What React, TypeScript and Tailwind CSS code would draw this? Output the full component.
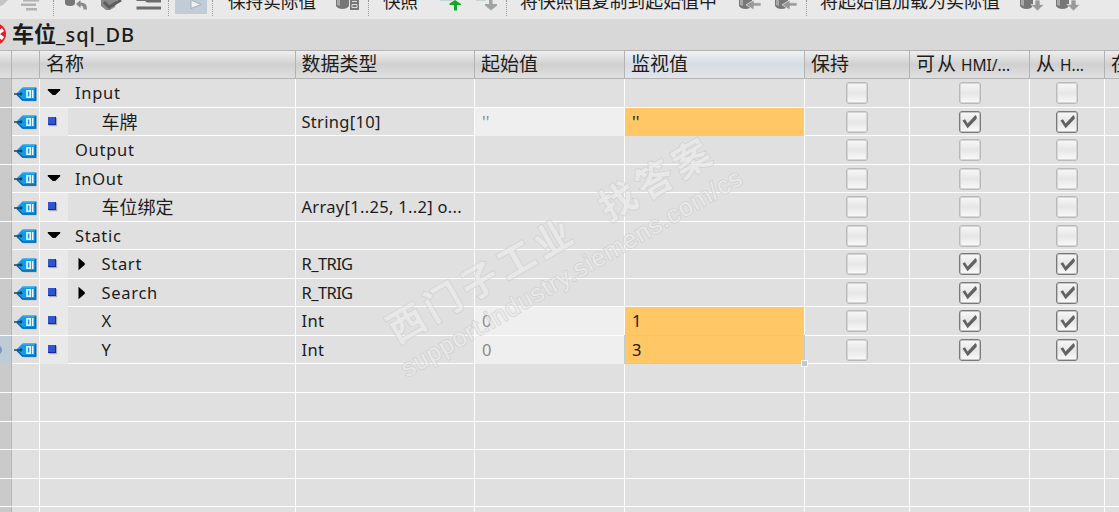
import clsx from "clsx";

type Row = {
  name: string;
  kind: "section" | "item";
  arrow?: "down" | "right";
  type?: string;
  start?: string;
  value?: string;
  checked?: boolean;
  selected?: boolean;
};

const rows: Row[] = [
  { name: "Input", kind: "section", arrow: "down" },
  { name: "车牌", kind: "item", type: "String[10]", start: "''", value: "''", checked: true },
  { name: "Output", kind: "section" },
  { name: "InOut", kind: "section", arrow: "down" },
  { name: "车位绑定", kind: "item", type: "Array[1..25, 1..2] o..." },
  { name: "Static", kind: "section", arrow: "down" },
  { name: "Start", kind: "item", arrow: "right", type: "R_TRIG", checked: true },
  { name: "Search", kind: "item", arrow: "right", type: "R_TRIG", checked: true },
  { name: "X", kind: "item", type: "Int", start: "0", value: "1", checked: true },
  { name: "Y", kind: "item", type: "Int", start: "0", value: "3", checked: true, selected: true },
];

const emptyRows = [0, 1, 2, 3, 4, 5];

const grid = "grid grid-cols-[12px_28px_255.5px_179.5px_150px_180px_105px_120px_75px_60px]";
const cell = "border-r-[1.5px] border-[#fdfdfd]";

const TagIcon = () => (
  <svg width="24" height="18" viewBox="0 0 24 18" className="block">
    <path d="M8 3.5 10.5 2H23v14.5H10L8 15 3 10V8.5z" fill="#aeb6bd" opacity=".7" />
    <path d="M2.5 8.5 8.5 2.5H22v13H8.5z" fill="#129be9" />
    <path d="M3 9.5 8.5 15H21.5V3" fill="none" stroke="#0869ae" strokeWidth="1.6" />
    <path d="M8.5 3H21" stroke="#45b8f5" strokeWidth="1" />
    <path d="M0 9h7" stroke="#174563" strokeWidth="1.5" />
    <circle cx="7" cy="9" r="1.4" fill="#083b68" />
    <path d="M13 5.7h3.2v6.6H13zM18.7 5v8" fill="none" stroke="#e8f8ff" strokeWidth="1.6" />
  </svg>
);

const Checkbox = ({ checked }: { checked?: boolean }) => (
  <div
    className={clsx(
      "flex h-[22px] w-[22px] items-center justify-center rounded-[3px] border-[1.5px] bg-linear-to-b from-[#f8f8f8] via-[#e6e6e6] to-[#fafafa]",
      checked
        ? "border-[#797979] shadow-[inset_0_0_0_1px_#c4c4c4]"
        : "border-[#b9b9b9] shadow-[inset_0_0_0_1px_#d6d6d6]"
    )}
  >
    {checked && (
      <svg width="17" height="17" viewBox="0 0 17 17">
        <path d="M1.5 7.5 4 6.3l2.6 4.2L14.5 2l1.2 1.8v2L6.6 15.2z" fill="#626262" />
      </svg>
    )}
  </div>
);

const Arrow = ({ dir }: { dir: "down" | "right" }) => (
  <svg width="14" height="14" viewBox="0 0 14 14">
    <path d={dir === "down" ? "M.8 4h12.4v1.2L8.3 10H5.7L.8 5.2z" : "M3.5.8 9.8 6.3v1.4L3.5 13.2z"} fill="#000" />
  </svg>
);

const Separator = () => <div className="absolute top-0 h-4 border-l-[1.5px] border-dotted border-[#999]" />;

const DbIcon = ({ arrow }: { arrow?: "left" | "down" }) => (
  <svg width="26" height="12" viewBox="0 0 26 12" className="block">
    <path d="M0 0h13v6q-2 3-6.500 3T0 6z" fill="#777" />
    <path d="M1 0h3v6L1 5z" fill="#aaa" />
    {arrow === "left" && <path d="M22 2.800h-7V0L7 4.800 15 10V6h7z" fill="#999" stroke="#e9e9e9" strokeWidth=".7" />}
    {arrow === "down" && <path d="M15 0h5v4.500h4L17.500 11 11 4.500h4z" fill="#999" stroke="#e9e9e9" strokeWidth=".7" />}
    {!arrow && (
      <g>
        <path d="M14 0h9v10h-9z" fill="#777" />
        <path d="M16 1.500h5M16 4.500h5v3h-5z" fill="none" stroke="#ddd" />
      </g>
    )}
  </svg>
);

const Toolbar = () => (
  <div className="relative h-[18.5px] overflow-hidden bg-[#e9e9e9] text-[17.6px] leading-[18px] whitespace-nowrap text-[#1c1c1c]">
    <div className="absolute top-0 left-0">
      <svg width="170" height="13" viewBox="0 0 170 13">
        <path d="M0 0h8L3 5 0 6z" fill="#c4c4c4" />
        <path d="M23 0h16v1.500H23zM21 3.500h15v2.500H21zM26 8h11v2.500H26z" fill="#b2b2b2" />
        <path d="M65 0h10v3q0 3-5 3t-5-3z" fill="#777" />
        <path d="M76 4 80.500 0v2.500q7 0 6.500 7h-3.500q0-4-3-4V8z" fill="#8a8a8a" />
        <path d="M101 0h16l-2 7-5 3h-4l-5-4z" fill="#888" />
        <path d="M104 2l5 5L121 0" fill="none" stroke="#5c5c5c" strokeWidth="3" />
        <path d="M136.500 0H161v2.500h-14L145 1h-8.500zM136.500 6.500H161V9.500H136.500z" fill="#6c6c6c" />
      </svg>
    </div>
    <div className="absolute left-[53px]"><Separator /></div>
    <div className="absolute left-[168px]"><Separator /></div>
    <div className="absolute top-0 left-[175px] h-3.5 w-8 bg-[#c1ccd6]">
      <svg width="32" height="14"><path d="M16 1v7.500L26 4.500 16 0" fill="#edf1f4" stroke="#99a4ae" strokeWidth=".8" /></svg>
    </div>
    <div className="absolute left-[212px]"><Separator /></div>
    <span className="absolute -top-2 left-[228px]">保持实际值</span>
    <div className="absolute top-0 left-[336px]"><DbIcon /></div>
    <div className="absolute left-[368px]"><Separator /></div>
    <span className="absolute -top-2 left-[383px]">快照</span>
    <svg className="absolute top-0 left-[438px]" width="64" height="12" viewBox="0 0 64 12">
      <path d="M2 0h12M38 0h10" stroke="#b9cbd6" strokeWidth="1.500" />
      <path d="M16 10.500V5h-4.500v-1.500L17 0l6 4v1h-4v5.500z" fill="#16a72a" />
      <path d="M51 0h3.500v4H59v1.500L53 10.500 47 5.500V4h4z" fill="#a2a2a2" />
    </svg>
    <div className="absolute left-[506px]"><Separator /></div>
    <span className="absolute -top-2 left-[520px] text-[17.9px]">将快照值复制到起始值中</span>
    <div className="absolute top-0 left-[739px]"><DbIcon arrow="left" /></div>
    <div className="absolute top-0 left-[775px]"><DbIcon arrow="left" /></div>
    <div className="absolute left-[806px]"><Separator /></div>
    <span className="absolute -top-2 left-[820px] text-[18px]">将起始值加载为实际值</span>
    <div className="absolute top-0 left-[1020px]"><DbIcon arrow="down" /></div>
    <div className="absolute top-0 left-[1056px]"><DbIcon arrow="down" /></div>
  </div>
);

const headers = ["", "", "名称", "数据类型", "起始值", "监视值", "保持"];

const Header = () => (
  <div className={clsx(grid, "h-[29px] border-t-[1.5px] border-b-[1.5px] border-[#b3b3b3] text-[19px] leading-[27px]")}>
    {headers.map((title, i) => (
      <div
        key={i}
        className={clsx(
          "overflow-hidden border-r-[1.5px] border-[#b3b3b3] pl-1.5 whitespace-nowrap",
          title === "监视值"
            ? "bg-linear-to-b from-[#eff1f4] via-[#d7dce4] to-[#e2e6ea]"
            : "bg-linear-to-b from-[#efefef] via-[#d0d0d0] to-[#e0e0e0]"
        )}
      >
        {title}
      </div>
    ))}
    <div className="overflow-hidden border-r-[1.5px] border-[#b3b3b3] bg-linear-to-b from-[#efefef] via-[#d0d0d0] to-[#e0e0e0] pl-1.5 whitespace-nowrap">
      可<span className="ml-[2px]">从</span><span className="ml-[5px] text-[15.5px]">HMI/...</span>
    </div>
    <div className="overflow-hidden border-r-[1.5px] border-[#b3b3b3] bg-linear-to-b from-[#efefef] via-[#d0d0d0] to-[#e0e0e0] pl-1.5 whitespace-nowrap">
      从<span className="ml-[5px] text-[15.5px]">H...</span>
    </div>
    <div className="overflow-hidden bg-linear-to-b from-[#efefef] via-[#d0d0d0] to-[#e0e0e0] pl-1.5 whitespace-nowrap">在</div>
  </div>
);

const TableRow = ({ row }: { row: Row }) => {
  const item = row.kind === "item";
  return (
    <div className={clsx(grid, "h-[28.55px] border-b-[1.5px] border-[#fdfdfd] text-[16.5px] leading-[28px] whitespace-nowrap")}>
      <div className={clsx("overflow-hidden border-r border-[#b5b5b5]", row.selected ? "bg-[#bfcbd7]" : "bg-[#cacaca]")}>
        {row.selected && <div className="mt-[9px] -ml-2 h-2.5 w-2.5 rounded-full bg-[#7798c5]" />}
      </div>
      <div className={clsx(cell, "pt-[5.5px] pl-[1.5px]")}>
        <TagIcon />
      </div>
      <div className={clsx(cell, "flex")}>
        <div className={clsx("flex w-[27.5px] items-center", item ? "bg-[#e9e9e9] pl-2" : "pl-[7px]")}>
          {item ? (
            <div className="mb-0.5 h-2 w-2 border-r border-b border-[#16289b] bg-[#3155d0] shadow-[1px_1px_1px_#aaa]" />
          ) : (
            row.arrow && <div className="mb-0.5"><Arrow dir={row.arrow} /></div>
          )}
        </div>
        {item && (
          <div className="flex w-[34px] items-center pl-[7px]">{row.arrow && <Arrow dir={row.arrow} />}</div>
        )}
        <span className={clsx(/[车]/.test(row.name) ? "text-[18px]" : "tracking-[0.7px]", !item && "pl-[7.5px]")}>
          {row.name}
        </span>
      </div>
      <div className={clsx(cell, "pl-1.5", row.type === "R_TRIG" ? "tracking-[-0.6px]" : "tracking-[0.3px]")}>
        {row.type}
      </div>
      <div className={clsx(cell, "pl-[7px] text-[#8b8b8b]", row.start && "bg-[#efefef]")}>{row.start}</div>
      <div className={clsx(cell, "relative pl-[7px]", row.value && "bg-[#ffc766]")}>
        {row.value}
        {row.selected && (
          <>
            <div className="absolute -top-px -right-px bottom-0 -left-px border-[1.5px] border-[#bfcbd5]" />
            <div className="absolute -right-1 -bottom-[3px] h-[7px] w-[7px] border border-[#f7f7f7] bg-[#bdcad5]" />
          </>
        )}
      </div>
      <div className={clsx(cell, "flex justify-center pt-[3px]")}><Checkbox /></div>
      <div className={clsx(cell, "flex justify-center pt-[3px]")}><Checkbox checked={row.checked} /></div>
      <div className={clsx(cell, "flex justify-center pt-[3px]")}><Checkbox checked={row.checked} /></div>
      <div />
    </div>
  );
};

const Watermark = () => (
  <div className="pointer-events-none absolute top-[354px] left-[398px] origin-bottom-left -rotate-30 whitespace-nowrap text-[#ebebeb] opacity-75 [-webkit-text-stroke:1.6px_#cdcdcd] [paint-order:stroke_fill]">
    <div className="absolute bottom-[2px] left-[4px] text-[37px] leading-[42px] font-bold tracking-[5.3px]">
      西门子工业<span className="ml-[33px]">找答案</span>
    </div>
    <div className="absolute bottom-[-30px] left-[-4px] font-['Liberation_Sans'] text-[25px] leading-[28px] tracking-[0.9px]">
      support.industry.siemens.com/cs
    </div>
  </div>
);

const App = () => {
  return (
    <div className="relative h-[512px] w-[1119px] overflow-hidden bg-[#e0e0e0] font-['Noto_Sans','Noto_Sans_CJK_SC',sans-serif] text-[#1c1c1c]">
      <Toolbar />
      <div className="relative flex h-[31.5px] items-center bg-[#d8d8d8] pl-3">
        <svg className="absolute top-[3px] -left-[17px]" width="24" height="24" viewBox="0 0 24 24">
          <circle cx="12" cy="12" r="11" fill="#e32224" />
          <path d="m8 7.500 12 9M20 7.500 8 16.500" stroke="#fff" strokeWidth="3.500" />
        </svg>
        <h1 className="text-[20px] leading-[28px] font-medium whitespace-nowrap">
          <span className="text-[22px] font-bold">车位</span>
          <span className="tracking-[0.9px]">_sql_DB</span>
        </h1>
      </div>
      <Header />
      <div>
        {rows.map((row) => (
          <TableRow key={row.name} row={row} />
        ))}
        {emptyRows.map((n) => (
          <div key={n} className={clsx(grid, "h-[28.55px] border-b-[1.5px] border-[#fdfdfd]")}>
            <div className="border-r border-[#b5b5b5] bg-[#cacaca]" />
            {headers.map((_, i) => (
              <div key={i} className={cell} />
            ))}
            <div className={cell} />
            <div />
          </div>
        ))}
      </div>
      <Watermark />
    </div>
  );
};

export default App;
